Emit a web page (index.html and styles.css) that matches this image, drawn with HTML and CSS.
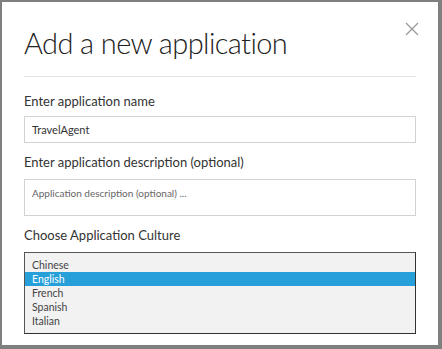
FILE: index.html
```html
<!DOCTYPE html>
<html lang="en">
<head>
  <meta charset="UTF-8">
  <meta name="viewport" content="width=device-width, initial-scale=1.0">
  <title>Add a new application</title>
  <link rel="stylesheet" href="styles.css">
</head>
<body>
  <div class="dialog">
    <div class="dialog-header">
      <h1 class="dialog-title">Add a new application</h1>
      <button class="close-button" aria-label="Close">
        <svg width="14" height="14" viewBox="0 0 14 14">
          <path d="M1 1 L13 13 M13 1 L1 13" stroke="#9a9a9a" stroke-width="1.4" fill="none" />
        </svg>
      </button>
    </div>

    <div class="field field-name">
      <label class="field-label" for="app-name">Enter application name</label>
      <input id="app-name" class="field-input" type="text" value="TravelAgent">
    </div>

    <div class="field field-desc">
      <label class="field-label" for="app-desc">Enter application description (optional)</label>
      <textarea id="app-desc" class="field-textarea" placeholder="Application description (optional) ..."></textarea>
    </div>

    <div class="field field-culture">
      <label class="field-label">Choose Application Culture</label>
      <div class="culture-list">
        <div class="culture-item">Chinese</div>
        <div class="culture-item selected">English</div>
        <div class="culture-item">French</div>
        <div class="culture-item">Spanish</div>
        <div class="culture-item">Italian</div>
      </div>
    </div>
  </div>
</body>
</html>
```

FILE: styles.css
```css
body {
  margin: 0;
  background-color: #7f7f7f;
  font-family: Lato, "Open Sans", Arial, sans-serif;
  color: #333;
  height: 349px;
  overflow: hidden;
}

.dialog {
  background-color: #fff;
  margin: 2px 4px 0 2px;
  height: 343px;
  padding: 0 22px;
  box-sizing: border-box;
}

.dialog-header {
  display: flex;
  justify-content: space-between;
  align-items: flex-start;
  height: 75px;
  border-bottom: 1px solid #e3e3e3;
  box-sizing: border-box;
}

.dialog-title {
  margin: 24px 0 0 0;
  font-size: 29px;
  font-weight: 300;
  letter-spacing: -0.6px;
  line-height: 34px;
  color: #222;
}

.close-button {
  margin: 20px -3px 0 0;
  padding: 0;
  border: none;
  background: none;
  width: 14px;
  height: 14px;
  cursor: pointer;
}

.field {
  display: flex;
  flex-direction: column;
}

.field-label {
  font-size: 13px;
  line-height: 18px;
  color: #333;
}

.field-name {
  margin-top: 15px;
  gap: 6px;
}

.field-desc {
  margin-top: 10px;
  gap: 8px;
}

.field-culture {
  margin-top: 10px;
  gap: 8px;
}

.field-input,
.field-textarea {
  font-family: Lato, "Open Sans", Arial, sans-serif;
  font-size: 11px;
  color: #333;
  border: 1px solid #d2d2d2;
  padding: 0 7px;
  margin: 0;
  box-sizing: border-box;
  outline: none;
}

.field-input {
  height: 27px;
}

.field-textarea {
  height: 37px;
  padding-top: 7px;
  font-size: 10px;
  resize: none;
}

.field-textarea::placeholder {
  color: #666;
}

.culture-list {
  height: 82px;
  background-color: #f2f2f2;
  border: 1px solid #555;
  border-bottom-color: #333;
  border-right-color: #333;
  box-sizing: border-box;
  padding-top: 5px;
}

.culture-item {
  font-size: 10.5px;
  line-height: 14px;
  padding-left: 7px;
  color: #444;
}

.culture-item.selected {
  background-color: #279fd8;
  color: #fff;
}
```
